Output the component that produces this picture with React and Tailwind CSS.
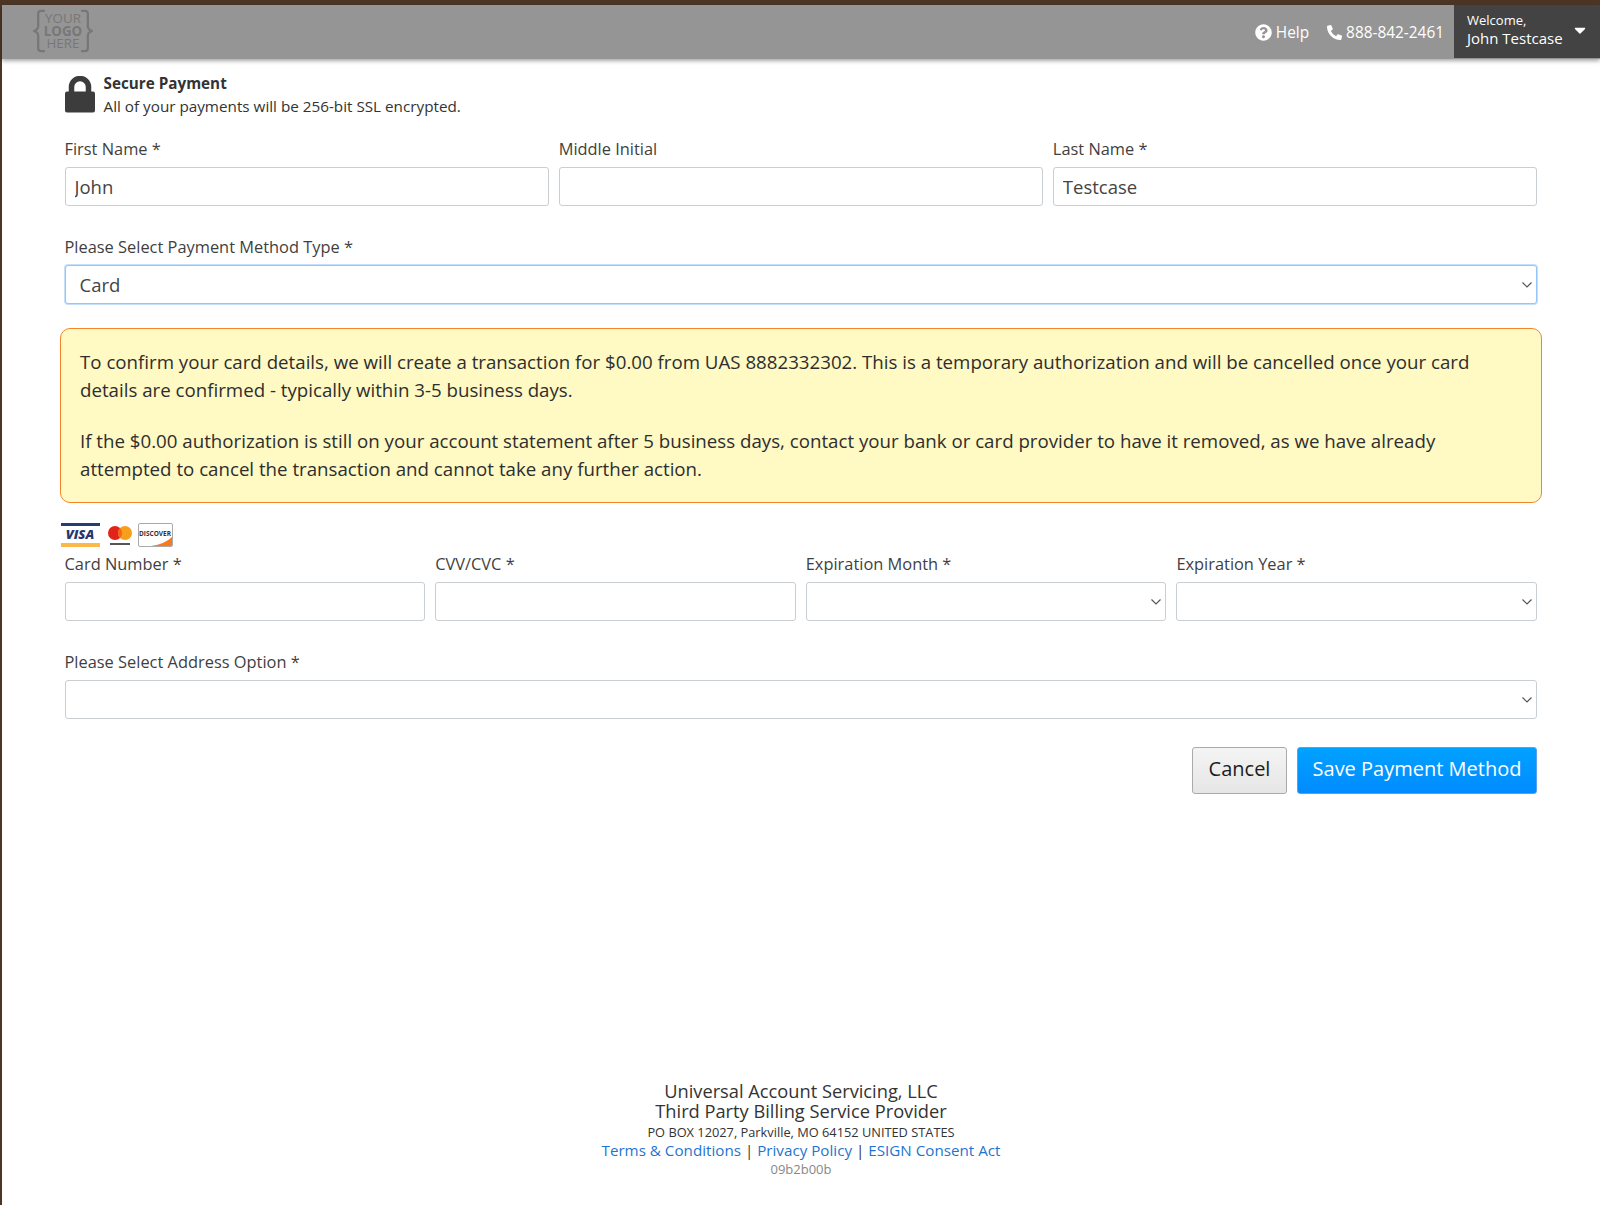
import React from 'react';
import { FaCaretDown, FaPhoneAlt, FaQuestionCircle } from 'react-icons/fa';

function Field({ label, value = '', className = '' }) {
    return (
        <div className={className}>
            <label className="block text-[16.4px] leading-[24px] text-[#3f3f3f] mb-[6px]">{label}</label>
            <input readOnly value={value} className="block w-full h-[39px] px-[9px] bg-white border border-[#c9ced3] rounded-[3px] text-[18.5px] text-[#444]" />
        </div>
    );
}

function SelectField({ label, value = '', focused = false, className = '' }) {
    return (
        <div className={className}>
            <label className="block text-[16.4px] leading-[24px] text-[#3f3f3f] mb-[6px]">{label}</label>
            <div className="relative">
                <select
                    defaultValue={value}
                    className={focused
                        ? 'block w-full h-[39px] pl-[14px] bg-white border border-[#94c6fa] shadow-[0_0_0_1px_#c4e0fd] rounded-[3px] text-[18.5px] text-[#444] appearance-none'
                        : 'block w-full h-[39px] pl-[14px] bg-white border border-[#c9ced3] rounded-[3px] text-[18.5px] text-[#444] appearance-none'}
                >
                    <option value={value}>{value}</option>
                </select>
                <svg className="absolute right-[5px] top-[17px] w-[10px] h-[6px]" viewBox="0 0 10 6" fill="none" stroke="#555" strokeWidth="1.2">
                    <path d="M0.5 0.5 L5 5 L9.5 0.5" />
                </svg>
            </div>
        </div>
    );
}

function CardLogos() {
    return (
        <div className="flex items-center h-[24px] ml-[-4px] mb-[1px]">
            <div className="flex flex-col justify-between w-[39px] h-[24px]">
                <div className="h-[3px] bg-[#2a3a78]"></div>
                <div className="text-center text-[13px] leading-[14px] mt-[-2px] font-extrabold italic text-[#26376f]">VISA</div>
                <div className="h-[4px] bg-[#fbb94a]"></div>
            </div>
            <svg className="ml-[7px]" width="26" height="24" viewBox="0 0 26 24">
                <circle cx="8" cy="10" r="7" fill="#e2231a" />
                <circle cx="18" cy="10" r="7" fill="#f79e1b" />
                <path d="M13 5 a7 7 0 0 1 0 10 a7 7 0 0 1 0 -10" fill="#f2641f" />
                <rect x="3" y="20" width="20" height="2" fill="#555" />
            </svg>
            <div className="relative ml-[5px] w-[35px] h-[24px] bg-white border border-[#aaa] rounded-[2px] overflow-hidden">
                <svg className="absolute inset-0" width="33" height="22" viewBox="0 0 33 22">
                    <path d="M33 13 V22 H12 Q26 20 33 13" fill="#f47b20" />
                </svg>
                <div className="absolute left-0 right-0 top-[6px] text-center text-[6.5px] leading-[8px] font-bold text-[#333]">DISCOVER</div>
            </div>
        </div>
    );
}

function Logo() {
    return (
        <svg className="ml-[28px] mt-[-2px] overflow-visible" width="66" height="42" viewBox="0 0 64 44" fill="none">
            <path d="M13 1 H9 Q6 1 6 4 V17 Q6 21 1 22 Q6 23 6 27 V40 Q6 43 9 43 H13" stroke="#777" strokeWidth="2.4" />
            <path d="M51 1 H55 Q58 1 58 4 V17 Q58 21 63 22 Q58 23 58 27 V40 Q58 43 55 43 H51" stroke="#777" strokeWidth="2.4" />
            <g fill="#777" fontSize="14" textAnchor="middle">
                <text x="32" y="14">YOUR</text>
                <text x="32" y="27" fontWeight="700">LOGO</text>
                <text x="32" y="40">HERE</text>
            </g>
        </svg>
    );
}

function LockIcon() {
    return (
        <svg className="shrink-0" width="30" height="37" viewBox="0 0 30 37">
            <path d="M6.5 18 V11 a8.5 8.5 0 0 1 17 0 V18" fill="none" stroke="#3c3c3c" strokeWidth="5.5" />
            <rect x="0" y="15.5" width="30" height="21" rx="2" fill="#3c3c3c" />
        </svg>
    );
}

export default function App() {
    return (
        <div className="flex flex-col min-h-[1205px] bg-white border-l-2 border-t-[5px] border-[#4d3526] font-['Open_Sans',sans-serif] text-[#333]">
            <header className="relative flex items-center justify-between h-[54px] bg-[#959595] shadow-[0_2px_4px_rgba(0,0,0,0.35)]">
                <Logo />
                <div className="flex items-center h-full text-white">
                    <a href="#" className="flex items-center gap-[4px] mt-[1px] text-[15.4px]">
                        <FaQuestionCircle className="w-[17px] h-[17px]" /> Help
                    </a>
                    <a href="#" className="flex items-center gap-[4px] mt-[1px] text-[15.4px] ml-[18px] mr-[10px]">
                        <FaPhoneAlt className="w-[15px] h-[15px]" /> 888-842-2461
                    </a>
                    <div className="flex items-center w-[146px] h-[53px] self-start pl-[13px] bg-[#434343]">
                        <div className="flex-1 mb-[4px]">
                            <div className="text-[13px] leading-[17px]">Welcome,</div>
                            <div className="text-[15px] leading-[18px]">John Testcase</div>
                        </div>
                        <FaCaretDown className="w-[18px] h-[18px] mr-[11px] mb-[4px]" />
                    </div>
                </div>
            </header>

            <main className="pl-[62.5px] pr-[63px]">
                <div className="flex items-center mt-[13px]">
                    <LockIcon />
                    <div className="ml-[9px] text-[15.25px] leading-[22.5px]">
                        <div className="font-bold">Secure Payment</div>
                        <div>All of your payments will be 256-bit SSL encrypted.</div>
                    </div>
                </div>

                <div className="grid grid-cols-3 gap-[10px] mt-[20px]">
                    <Field label="First Name *" value="John" />
                    <Field label="Middle Initial" />
                    <Field label="Last Name *" value="Testcase" />
                </div>

                <SelectField label="Please Select Payment Method Type *" value="Card" focused className="mt-[29px]" />

                <div className="ml-[-4.5px] mr-[-5px] mt-[24px] px-[19px] pt-[19px] pb-[15px] h-[175px] bg-[#fff9c4] border border-[#f5852a] rounded-[10px] text-[18.71px] leading-[28px] text-[#2e2e2e]">
                    <p>To confirm your card details, we will create a transaction for $0.00 from UAS 8882332302. This is a temporary authorization and will be cancelled once your card details are confirmed - typically within 3-5 business days.</p>
                    <p className="mt-[23px]">If the $0.00 authorization is still on your account statement after 5 business days, contact your bank or card provider to have it removed, as we have already attempted to cancel the transaction and cannot take any further action.</p>
                </div>

                <div className="mt-[20px]">
                    <CardLogos />
                </div>
                <div className="grid grid-cols-4 gap-[10px] mt-[5px]">
                    <Field label="Card Number *" />
                    <Field label="CVV/CVC *" />
                    <SelectField label="Expiration Month *" />
                    <SelectField label="Expiration Year *" />
                </div>

                <SelectField label="Please Select Address Option *" className="mt-[29px]" />

                <div className="flex justify-end gap-[10px] mt-[28px]">
                    <button className="w-[95px] h-[47px] pb-[4px] bg-linear-to-b from-[#f4f4f4] to-[#e6e6e6] border border-[#aaa] rounded-[3px] text-[20px] text-[#1c1c1c]">Cancel</button>
                    <button className="w-[240px] h-[47px] pb-[4px] bg-linear-to-b from-[#00a2ff] to-[#008bff] border border-[#5aa0ee] rounded-[3px] text-[20px] text-white">Save Payment Method</button>
                </div>
            </main>

            <footer className="mt-auto pb-[25px] text-center text-[#333]">
                <div className="text-[18.25px] leading-[20px]">Universal Account Servicing, LLC</div>
                <div className="text-[18.25px] leading-[20px]">Third Party Billing Service Provider</div>
                <div className="text-[12.8px] leading-[20px] mt-[1px]">PO BOX 12027, Parkville, MO 64152 UNITED STATES</div>
                <div className="text-[15.2px] leading-[16px]">
                    <a href="#" className="text-[#1f74d0]">Terms &amp; Conditions</a>
                    {' | '}
                    <a href="#" className="text-[#1f74d0]">Privacy Policy</a>
                    {' | '}
                    <a href="#" className="text-[#1f74d0]">ESIGN Consent Act</a>
                </div>
                <div className="text-[13px] leading-[22px] text-[#888]">09b2b00b</div>
            </footer>
        </div>
    );
}
